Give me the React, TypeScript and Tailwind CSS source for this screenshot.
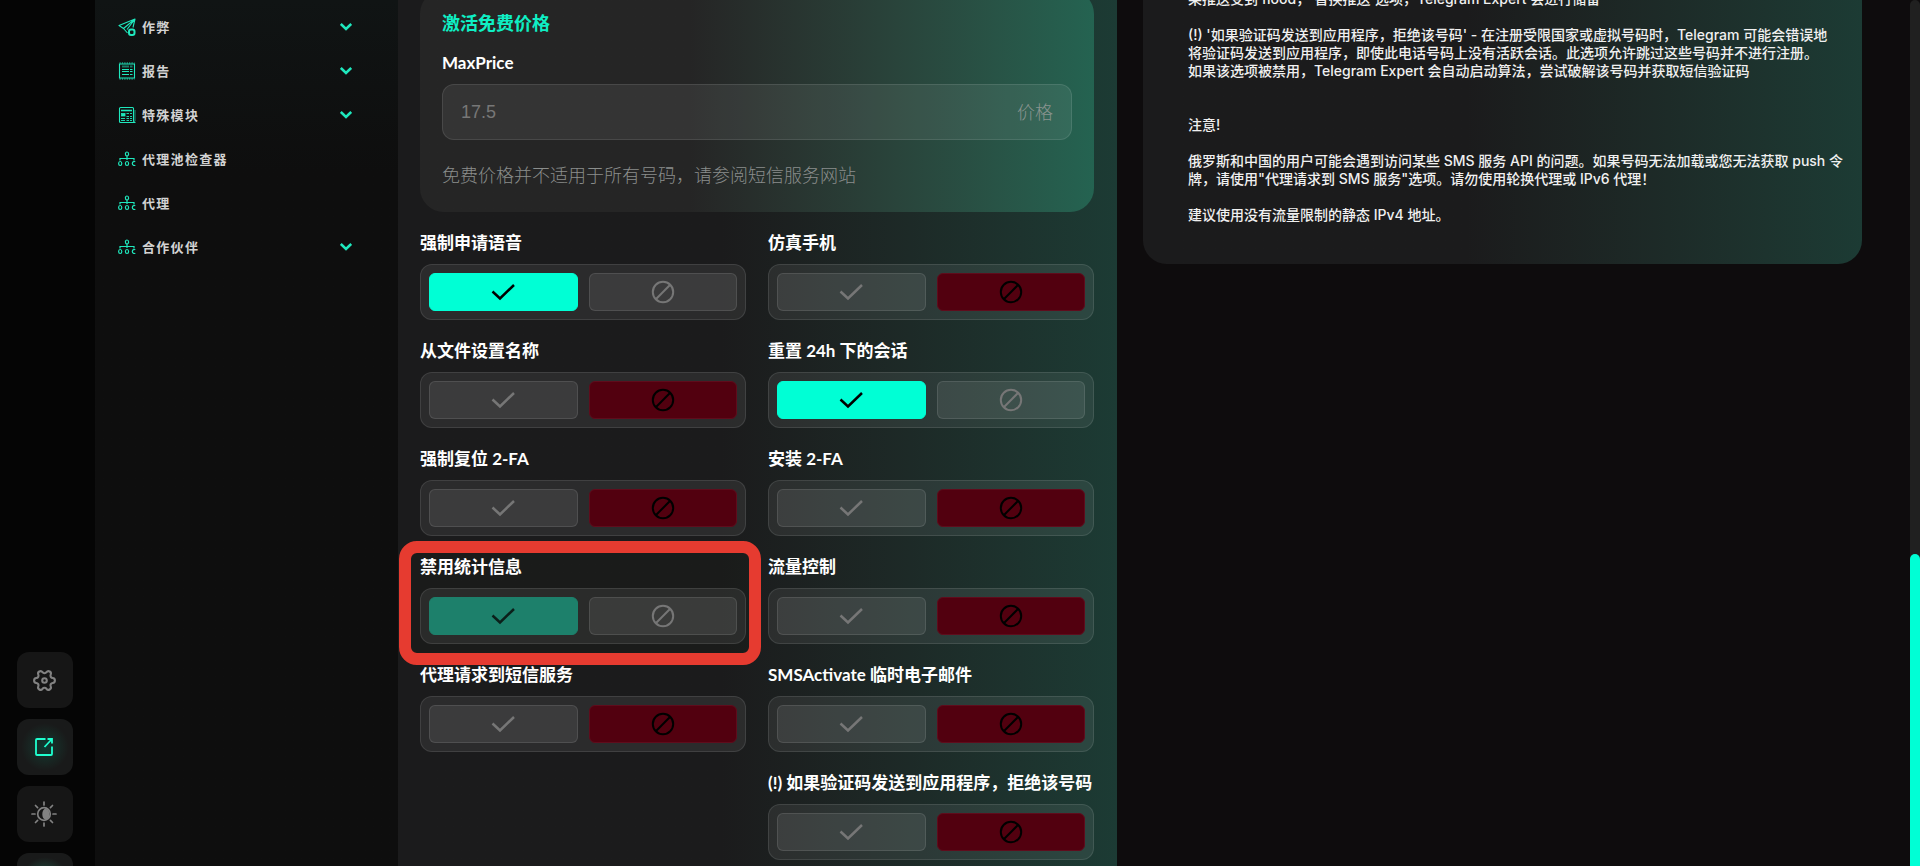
import { useId, useState } from 'react';
import type { ReactNode } from 'react';

interface NavItem {
  label: string;
  icon: ReactNode;
  expandable: boolean;
}

interface ToggleOption {
  label: string;
  enabled: boolean;
  highlighted?: boolean;
  secondColumn?: boolean;
}

const PlaneIcon = () => (
  <svg className="size-[18px] shrink-0" viewBox="0 0 18 18" fill="none" stroke="currentColor" aria-hidden="true">
    <path d="M17 1 1 7.5l4.5 3L17 1l-2 8.5M5.5 10.5 9.5 15M17 1 9 11.5" strokeWidth="1.1" strokeLinejoin="round" />
    <rect x="11" y="11.5" width="5.5" height="5.5" rx="2" strokeWidth="2" />
  </svg>
);

const ReportIcon = () => (
  <svg className="size-[18px] shrink-0" viewBox="0 0 18 18" fill="none" stroke="currentColor" aria-hidden="true">
    <path d="M1.5 1.5v15M16.5 1.5v15M1.5 2h15M1.5 16h15" strokeWidth="1.1" />
    <path d="M1.5 1h15M1.5 17h15" strokeWidth="1.2" strokeDasharray="1.2 1.2" />
    <path d="M4 4.5h7M12 4.5h2.5" strokeWidth="2" opacity="0.5" />
    <path d="M4 7.5h7M12 7.5h2.5M4 9.5h7M12 9.5h2.5M4 12.5h7M12 12.5h2.5" strokeWidth="1" />
  </svg>
);

const ModuleIcon = () => (
  <svg className="size-[18px] shrink-0" viewBox="0 0 18 18" fill="none" stroke="currentColor" aria-hidden="true">
    <path d="M17.5 16.5H2.5a1 1 0 0 1-1-1V2.5a1 1 0 0 1 1-1h12a1 1 0 0 1 1 1v12a2 2 0 0 0 2 2" strokeWidth="1.1" />
    <path d="M17 4v11" strokeWidth="1.2" opacity="0.5" />
    <path d="M3 4.5h11" strokeWidth="1.6" />
    <rect x="3.5" y="7.5" width="3.5" height="2.5" fill="currentColor" strokeWidth="0.8" />
    <path d="M8.5 7.5h2.5M12 7.5h2M8.5 10.5h2.5M12 10.5h2M3 12.5h4M8.5 12.5h2.5M12 12.5h2M3 14.5h4M8.5 14.5h2.5M12 14.5h2" strokeWidth="0.9" />
  </svg>
);

const ProxyIcon = () => (
  <svg className="size-[18px] shrink-0" viewBox="0 0 18 18" fill="none" stroke="currentColor" strokeWidth="1.2" aria-hidden="true">
    <ellipse cx="9" cy="4" rx="1.6" ry="2" />
    <path d="M9 6v4M2 10.5V8.500h14v2" />
    <ellipse cx="2.2" cy="13.500" rx="1.6" ry="2" />
    <ellipse cx="9" cy="13.500" rx="1.6" ry="2" />
    <path d="M17.3 11.7c-.5-.3-3-.5-3 1.8s2.5 2.1 3 1.8" />
  </svg>
);

const ChevronIcon = () => (
  <svg className="h-2 w-3" viewBox="0 0 12 8" fill="none" stroke="currentColor" strokeWidth="2.6" aria-hidden="true">
    <path d="M.8 1 6 6 11.2 1" />
  </svg>
);

const GearIcon = () => (
  <svg className="size-[25px]" viewBox="0 0 24 24" fill="none" stroke="currentColor" strokeWidth="2" strokeLinejoin="round" aria-hidden="true">
    <path
      transform="rotate(90 12 12)"
      d="M9.671 4.136a2.34 2.34 0 0 1 4.659 0 2.34 2.34 0 0 0 3.319 1.915 2.34 2.34 0 0 1 2.33 4.033 2.34 2.34 0 0 0 0 3.831 2.34 2.34 0 0 1-2.33 4.033 2.34 2.34 0 0 0-3.319 1.915 2.34 2.34 0 0 1-4.659 0 2.34 2.34 0 0 0-3.32-1.915 2.34 2.34 0 0 1-2.33-4.033 2.34 2.34 0 0 0 0-3.831A2.34 2.34 0 0 1 6.35 6.051a2.34 2.34 0 0 0 3.319-1.915"
    />
    <circle cx="12" cy="12" r="2.2" />
  </svg>
);

const ExternalIcon = () => (
  <svg className="size-5" viewBox="0 0 20 20" fill="none" stroke="currentColor" strokeWidth="1.8" aria-hidden="true">
    <path d="M11.5 2H3a1 1 0 0 0-1 1v14a1 1 0 0 0 1 1h14a1 1 0 0 0 1-1V9.5" />
    <path d="M10.5 10 17.5 2.5M13.5 2H18v4.5" />
  </svg>
);

const ThemeIcon = () => (
  <svg className="size-[26px]" viewBox="0 0 26 26" fill="none" stroke="currentColor" strokeWidth="1.7" strokeLinecap="round" aria-hidden="true">
    <circle cx="13" cy="13" r="6.3" />
    <path d="M14.500 7.500a6 6 0 0 1 0 11.300c-2-.8-3.200-2.600-3.200-5.600s1.200-4.900 3.200-5.700Z" fill="currentColor" stroke="none" />
    <path d="M13 1v3M13 22v3M1 13h3M22 13h3M4.5 4.5l2.1 2.1M19.4 19.4l2.1 2.1M4.5 21.5l2.1-2.1M19.4 6.6l2.1-2.1" />
  </svg>
);

const CheckIcon = () => (
  <svg className="size-6" viewBox="0 0 24 24" fill="none" stroke="currentColor" strokeWidth="2.5" aria-hidden="true">
    <path d="M1.5 11.5 9 18.5 23 5" />
  </svg>
);

const BanIcon = () => (
  <svg className="size-6" viewBox="0 0 24 24" fill="none" stroke="currentColor" strokeWidth="2" aria-hidden="true">
    <circle cx="12" cy="12" r="10.2" />
    <path d="M4.8 19.2 19.2 4.8" />
  </svg>
);

const navItems: NavItem[] = [
  { label: "作弊", icon: <PlaneIcon />, expandable: true },
  { label: "报告", icon: <ReportIcon />, expandable: true },
  { label: "特殊模块", icon: <ModuleIcon />, expandable: true },
  { label: "代理池检查器", icon: <ProxyIcon />, expandable: false },
  { label: "代理", icon: <ProxyIcon />, expandable: false },
  { label: "合作伙伴", icon: <ProxyIcon />, expandable: true }
];

const toggleOptions: ToggleOption[] = [
  { label: "强制申请语音", enabled: true },
  { label: "仿真手机", enabled: false },
  { label: "从文件设置名称", enabled: false },
  { label: "重置 24h 下的会话", enabled: true },
  { label: "强制复位 2-FA", enabled: false },
  { label: "安装 2-FA", enabled: false },
  { label: "禁用统计信息", enabled: true, highlighted: true },
  { label: "流量控制", enabled: false },
  { label: "代理请求到短信服务", enabled: false },
  { label: "SMSActivate 临时电子邮件", enabled: false },
  { label: "(!) 如果验证码发送到应用程序，拒绝该号码", enabled: false, secondColumn: true }
];

const notes: string[][] = [
  ["果推送受到 flood，'替换推送'选项，Telegram Expert 会进行储备"],
  [
    "(!) '如果验证码发送到应用程序，拒绝该号码' - 在注册受限国家或虚拟号码时，Telegram 可能会错误地",
    "将验证码发送到应用程序，即使此电话号码上没有活跃会话。此选项允许跳过这些号码并不进行注册。",
    "如果该选项被禁用，Telegram Expert 会自动启动算法，尝试破解该号码并获取短信验证码"
  ],
  [],
  ["注意!"],
  [
    "俄罗斯和中国的用户可能会遇到访问某些 SMS 服务 API 的问题。如果号码无法加载或您无法获取 push 令",
    "牌，请使用\"代理请求到 SMS 服务\"选项。请勿使用轮换代理或 IPv6 代理！"
  ],
  ["建议使用没有流量限制的静态 IPv4 地址。"]
];

function Toggle({ label, enabled, highlighted, secondColumn }: ToggleOption) {
  const [isOn, setIsOn] = useState(enabled);
  const labelId = useId();

  const idle = 'border-white/10 bg-white/8 text-[#767676]';
  const on = highlighted ? 'border-[#1d806b] bg-[#1d806b] text-[#0b1f1a]' : 'border-[#00ffd5] bg-[#00ffd5] text-black';
  const off = 'border-[#5f0c1c] bg-[#52000f] text-black';

  return (
    <div className={`relative flex flex-col gap-[9px] ${secondColumn ? 'col-start-2' : ''}`}>
      {highlighted && (
        <div className="pointer-events-none absolute -top-[14px] -right-[15px] -bottom-[21px] -left-[21px] rounded-[18px] border-12 border-[#e63b30] bg-[#1b1c12]/20" />
      )}
      <span id={labelId} className="relative text-[17px] leading-6 font-bold whitespace-nowrap text-white">
        {label}
      </span>
      <div
        role="group"
        aria-labelledby={labelId}
        className="relative flex gap-[11px] rounded-xl border border-white/10 bg-white/7 p-2"
      >
        <button
          type="button"
          aria-label="开启"
          aria-pressed={isOn}
          onClick={() => setIsOn(true)}
          className={`flex h-[38px] flex-1 items-center justify-center rounded-md border ${isOn ? on : idle}`}
        >
          <CheckIcon />
        </button>
        <button
          type="button"
          aria-label="关闭"
          aria-pressed={!isOn}
          onClick={() => setIsOn(false)}
          className={`flex h-[38px] flex-1 items-center justify-center rounded-md border ${isOn ? idle : off}`}
        >
          <BanIcon />
        </button>
      </div>
    </div>
  );
}

export default function App() {
  const [price, setPrice] = useState('');

  return (
    <div className="flex h-screen overflow-hidden bg-[#0e0c0d] font-[Lato,'Noto_Sans_CJK_SC',sans-serif]">
      {/* Узкая панель быстрых действий */}
      <div className="flex w-[95px] shrink-0 flex-col justify-end bg-[#050505] pl-[17px]">
        <div className="-mb-[43px] flex flex-col gap-[11px]">
          <button type="button" aria-label="设置" className="flex size-14 items-center justify-center rounded-xl bg-[#161616] pr-0.5 text-[#828282]">
            <GearIcon />
          </button>
          <button type="button" aria-label="打开" className="flex size-14 items-center justify-center rounded-xl bg-[#191a1a] bg-radial from-[#0b3a31] to-[#191a1a] to-60% pr-0.5 text-[#1fffcf]">
            <ExternalIcon />
          </button>
          <button type="button" aria-label="主题" className="flex size-14 items-center justify-center rounded-xl bg-[#161616] pr-0.5 text-[#828282]">
            <ThemeIcon />
          </button>
          <button type="button" aria-label="更多" className="size-14 rounded-xl bg-radial from-[#0c5a4a] to-[#191a1a] to-60%" />
        </div>
      </div>

      {/* Меню */}
      <nav className="w-[303px] shrink-0 bg-[#0e0e0e] bg-linear-to-b from-[#101414] to-[#0e0e0e] to-20% pt-[5px]">
        {navItems.map((item) => (
          <a key={item.label} href="#" className="flex h-11 items-center pr-[46px] pl-[23px] text-[#1fe8bd]">
            {item.icon}
            <span className="ml-1.5 text-[13px] leading-5 font-bold tracking-widest text-[#d2d2d2]">{item.label}</span>
            {item.expandable && (
              <span className="ml-auto">
                <ChevronIcon />
              </span>
            )}
          </a>
        ))}
      </nav>

      <main className="grid min-w-0 flex-1 grid-cols-2 gap-[26px] pr-12">
        {/* Форма настроек */}
        <section className="bg-linear-to-r from-[#1b1b1c] from-45% to-[#1c3b34] pr-[23px] pl-[22px]">
          <div className="-mt-2.5 rounded-3xl bg-linear-to-r from-[#252525] from-40% to-[#246351] px-[22px] pt-[21px] pb-6">
            <h2 className="text-[18px] leading-6 font-bold text-[#0fefc4]">激活免费价格</h2>
            <label htmlFor="max-price" className="mt-4 block text-[17px] leading-6 font-bold text-white">
              MaxPrice
            </label>
            <div className="mt-[9px] flex h-14 items-center rounded-xl border border-white/10 bg-white/7 px-[18px] text-[18px]">
              <input
                id="max-price"
                value={price}
                onChange={(e) => setPrice(e.target.value)}
                placeholder="17.5"
                className="min-w-0 flex-1 bg-transparent font-['Liberation_Sans',sans-serif] text-[#d2d2d2] outline-none placeholder:text-[#777777]"
              />
              <span className="font-light text-[#8a9490]">价格</span>
            </div>
            <p className="mt-[22px] text-[18px] leading-[26px] font-light text-[#8a8d8c]">
              免费价格并不适用于所有号码，请参阅短信服务网站
            </p>
          </div>

          <div className="mt-[19px] grid grid-cols-2 gap-x-[22px] gap-y-[19px]">
            {toggleOptions.map((option) => (
              <Toggle key={option.label} {...option} />
            ))}
          </div>
        </section>

        {/* Описание */}
        <section className="-mt-2.5 flex flex-col gap-[18px] self-start rounded-b-3xl bg-linear-to-r from-[#1b1b1c] from-45% to-[#1c3b34] pr-6 pb-10 pl-[45px] font-[Inter,'Noto_Sans_CJK_SC',sans-serif] text-sm leading-[18px] font-medium text-[#f0f0f0]">
          {notes.map((lines, i) => (
            <p key={i}>
              {lines.map((line) => (
                <span key={line} className="block whitespace-nowrap">
                  {line}
                </span>
              ))}
            </p>
          ))}
        </section>
      </main>

      {/* Полоса прокрутки */}
      <div className="flex w-2.5 shrink-0 flex-col justify-end rounded-t-full bg-[#202020]">
        <div className="h-[36%] rounded-t-full bg-[#00ffd5]"></div>
      </div>
    </div>
  );
}
